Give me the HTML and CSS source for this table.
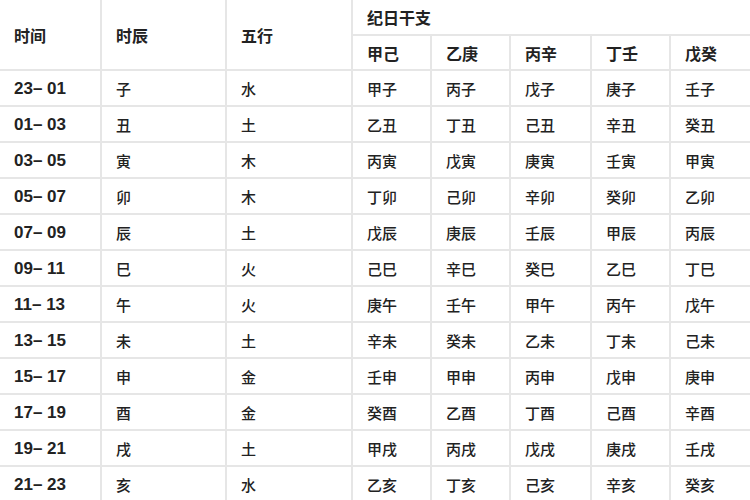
FILE: index.html
```html
<!DOCTYPE html>
<html lang="zh">
<head>
<meta charset="utf-8">
<title>时辰干支表</title>
<link rel="stylesheet" href="styles.css">
</head>
<body>
<table class="tbl">
  <colgroup>
    <col class="c-time"><col class="c-chen"><col class="c-wx">
    <col class="c-g1"><col class="c-g2"><col class="c-g3"><col class="c-g4"><col class="c-g5">
  </colgroup>
  <thead>
    <tr class="hrow">
      <th rowspan="2">时间</th>
      <th rowspan="2">时辰</th>
      <th rowspan="2">五行</th>
      <th colspan="5">纪日干支</th>
    </tr>
    <tr class="hrow">
      <th>甲己</th><th>乙庚</th><th>丙辛</th><th>丁壬</th><th>戊癸</th>
    </tr>
  </thead>
  <tbody>
    <tr><td class="t">23– 01</td><td>子</td><td>水</td><td>甲子</td><td>丙子</td><td>戊子</td><td>庚子</td><td>壬子</td></tr>
    <tr><td class="t">01– 03</td><td>丑</td><td>土</td><td>乙丑</td><td>丁丑</td><td>己丑</td><td>辛丑</td><td>癸丑</td></tr>
    <tr><td class="t">03– 05</td><td>寅</td><td>木</td><td>丙寅</td><td>戊寅</td><td>庚寅</td><td>壬寅</td><td>甲寅</td></tr>
    <tr><td class="t">05– 07</td><td>卯</td><td>木</td><td>丁卯</td><td>己卯</td><td>辛卯</td><td>癸卯</td><td>乙卯</td></tr>
    <tr><td class="t">07– 09</td><td>辰</td><td>土</td><td>戊辰</td><td>庚辰</td><td>壬辰</td><td>甲辰</td><td>丙辰</td></tr>
    <tr><td class="t">09– 11</td><td>巳</td><td>火</td><td>己巳</td><td>辛巳</td><td>癸巳</td><td>乙巳</td><td>丁巳</td></tr>
    <tr><td class="t">11– 13</td><td>午</td><td>火</td><td>庚午</td><td>壬午</td><td>甲午</td><td>丙午</td><td>戊午</td></tr>
    <tr><td class="t">13– 15</td><td>未</td><td>土</td><td>辛未</td><td>癸未</td><td>乙未</td><td>丁未</td><td>己未</td></tr>
    <tr><td class="t">15– 17</td><td>申</td><td>金</td><td>壬申</td><td>甲申</td><td>丙申</td><td>戊申</td><td>庚申</td></tr>
    <tr><td class="t">17– 19</td><td>酉</td><td>金</td><td>癸酉</td><td>乙酉</td><td>丁酉</td><td>己酉</td><td>辛酉</td></tr>
    <tr><td class="t">19– 21</td><td>戌</td><td>土</td><td>甲戌</td><td>丙戌</td><td>戊戌</td><td>庚戌</td><td>壬戌</td></tr>
    <tr><td class="t">21– 23</td><td>亥</td><td>水</td><td>乙亥</td><td>丁亥</td><td>己亥</td><td>辛亥</td><td>癸亥</td></tr>
  </tbody>
</table>
</body>
</html>
```
FILE: styles.css
```css
html, body {
  margin: 0;
  padding: 0;
  background: #ffffff;
}
body {
  font-family: "Liberation Sans", "Noto Sans CJK SC", sans-serif;
  color: #222222;
  overflow: hidden;
}
.tbl {
  border-collapse: collapse;
  table-layout: fixed;
  width: 750px;
}
.c-time { width: 101px; }
.c-chen { width: 125px; }
.c-wx { width: 126px; }
.c-g1 { width: 79px; }
.c-g2 { width: 79px; }
.c-g3 { width: 81px; }
.c-g4 { width: 79px; }
.c-g5 { width: 80px; }

.tbl th, .tbl td {
  border: 2px solid #e6e6e6;
  padding: 0 0 0 14px;
  text-align: left;
  vertical-align: middle;
  white-space: nowrap;
}
.tbl tr:first-child th { border-top: none; }
.tbl th:first-child, .tbl td:first-child { border-left: none; }
.tbl tr > :last-child { border-right: none; }
.tbl thead tr:first-child th:last-child { border-right: none; }

.hrow { height: 35px; }
.tbl th {
  font-family: "Noto Sans CJK SC", sans-serif;
  font-size: 16px;
  font-weight: 700;
}
.tbl tbody tr { height: 36px; }
.tbl td {
  font-family: "Noto Sans CJK SC", sans-serif;
  font-size: 15px;
  font-weight: 500;
}
.tbl td.t {
  font-family: "Liberation Sans", "Noto Sans CJK SC", sans-serif;
  font-size: 17px;
  font-weight: 700;
  padding-top: 2px;
}
```
